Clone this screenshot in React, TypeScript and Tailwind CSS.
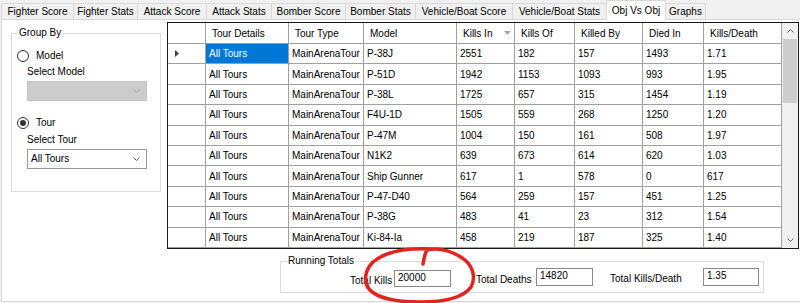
import React from "react";

type Col = { label: string; w: string; sort?: boolean };

const cols: Col[] = [
  { label: "Tour Details", w: "w-[83px]" },
  { label: "Tour Type", w: "w-[75px]" },
  { label: "Model", w: "w-[93px]" },
  { label: "Kills In", w: "w-[58px]", sort: true },
  { label: "Kills Of", w: "w-[60px]" },
  { label: "Killed By", w: "w-[68px]" },
  { label: "Died In", w: "w-[61px]" },
  { label: "Kills/Death", w: "w-[78px]" },
];

const rows: string[][] = [
  ["P-38J", "2551", "182", "157", "1493", "1.71"],
  ["P-51D", "1942", "1153", "1093", "993", "1.95"],
  ["P-38L", "1725", "657", "315", "1454", "1.19"],
  ["F4U-1D", "1505", "559", "268", "1250", "1.20"],
  ["P-47M", "1004", "150", "161", "508", "1.97"],
  ["N1K2", "639", "673", "614", "620", "1.03"],
  ["Ship Gunner", "617", "1", "578", "0", "617"],
  ["P-47-D40", "564", "259", "157", "451", "1.25"],
  ["P-38G", "483", "41", "23", "312", "1.54"],
  ["Ki-84-Ia", "458", "219", "187", "325", "1.40"],
];

const tabs = [
  { label: "Fighter Score", w: "w-[72px]" },
  { label: "Fighter Stats", w: "w-[64px]" },
  { label: "Attack Score", w: "w-[69px]" },
  { label: "Attack Stats", w: "w-[65px]" },
  { label: "Bomber Score", w: "w-[74px]" },
  { label: "Bomber Stats", w: "w-[70px]" },
  { label: "Vehicle/Boat Score", w: "w-[97px]" },
  { label: "Vehicle/Boat Stats", w: "w-[94px]" },
];

function Chevron({ up, color = "#606060" }: { up?: boolean; color?: string }) {
  return (
    <svg width="7" height="4" viewBox="0 0 7 4">
      <path
        d={up ? "M0.5 3.5 L3.5 0.5 L6.5 3.5" : "M0.5 0.5 L3.5 3.5 L6.5 0.5"}
        stroke={color}
        strokeWidth="1"
        fill="none"
      />
    </svg>
  );
}

function Radio({ checked, label }: { checked?: boolean; label: string }) {
  return (
    <div className="flex h-[14px] items-center pl-[5px]">
      <div className="flex h-[12px] w-[12px] items-center justify-center rounded-full border border-[#333333] bg-white">
        {checked && <div className="h-[6px] w-[6px] rounded-full bg-[#333333]" />}
      </div>
      <span className="ml-[7px] leading-[12px]">{label}</span>
    </div>
  );
}

export default function App() {
  return (
    <div className="relative h-[303px] w-[800px] overflow-hidden bg-[#f0f0f0] font-['Liberation_Sans',Arial,sans-serif] text-[10px] text-black">
      {/* tab strip */}
      <div className="flex h-[19px] items-end pl-[1px]">
        {tabs.map((t) => (
          <div
            key={t.label}
            className={`${t.w} flex h-[16px] shrink-0 justify-center border-l border-t border-[#d9d9d9] bg-[#f0f0f0] pt-[2px] leading-[12px]`}
          >
            {t.label}
          </div>
        ))}
        <div className="relative z-10 -mb-[1px] flex h-[20px] w-[60px] shrink-0 justify-center border-l border-r border-t border-[#d9d9d9] bg-white pt-[4px] leading-[12px]">
          Obj Vs Obj
        </div>
        <div className="flex h-[16px] w-[40px] shrink-0 justify-center border-r border-t border-[#d9d9d9] bg-[#f0f0f0] pt-[2px] leading-[12px]">
          Graphs
        </div>
      </div>

      {/* tab page */}
      <div className="ml-[1px] flex h-[283px] w-[800px] border border-[#d9d9d9] bg-white">
        {/* left: group by */}
        <div className="w-[165px] shrink-0 pt-[7px]">
          <fieldset className="ml-[9px] h-[165px] w-[150px] border border-[#dcdcdc]">
            <legend className="ml-[6px] px-[1px] leading-[12px]">Group By</legend>
            <div className="mt-[10px]">
              <Radio label="Model" />
            </div>
            <div className="mt-[3px] pl-[15px] leading-[12px]">Select Model</div>
            <div className="ml-[15px] mt-[3px] flex h-[20px] w-[120px] items-center justify-end border border-[#c4c4c4] bg-[#cccccc] pr-[6px]">
              <Chevron color="#a6a6a6" />
            </div>
            <div className="mt-[15px]">
              <Radio checked label="Tour" />
            </div>
            <div className="mt-[4px] pl-[15px] leading-[12px]">Select Tour</div>
            <div className="ml-[15px] mt-[3px] flex h-[20px] w-[120px] items-center justify-between border border-[#9a9a9a] bg-white pl-[3px] pr-[6px]">
              <span className="leading-[12px]">All Tours</span>
              <Chevron />
            </div>
          </fieldset>
        </div>

        {/* right: grid and totals */}
        <div className="flex-1 pt-[2px]">
          <div className="flex h-[227px] w-[632px] border border-[#1a1a1a] bg-white">
            <div className="w-[614px] shrink-0">
              <div className="flex h-[21px] border-b border-[#a0a0a0]">
                <div className="w-[38px] shrink-0 border-r border-[#a0a0a0]" />
                {cols.map((c) => (
                  <div
                    key={c.label}
                    className={`${c.w} flex shrink-0 items-center justify-between border-r border-[#a0a0a0] pl-[6px] pr-[3px]`}
                  >
                    <span>{c.label}</span>
                    {c.sort && (
                      <svg width="7" height="4" viewBox="0 0 7 4">
                        <path d="M0 0 H7 L3.5 4Z" fill="#a8a8a8" />
                      </svg>
                    )}
                  </div>
                ))}
              </div>
              {rows.map((r, i) => {
                const cells = ["All Tours", "MainArenaTour", ...r];
                return (
                  <div key={i} className="flex h-[20.4px] border-b border-[#a0a0a0]">
                    <div className="flex w-[38px] shrink-0 items-center border-r border-[#a0a0a0] pl-[7px]">
                      {i === 0 && (
                        <svg width="4" height="7" viewBox="0 0 4 7">
                          <path d="M0 0 L4 3.5 L0 7Z" fill="#404040" />
                        </svg>
                      )}
                    </div>
                    {cells.map((v, j) => (
                      <div
                        key={j}
                        className={`${cols[j].w} flex shrink-0 items-center border-r border-[#a0a0a0] pl-[3px] ${
                          i === 0 && j === 0 ? "bg-[#0078d7] text-white" : ""
                        }`}
                      >
                        {v}
                      </div>
                    ))}
                  </div>
                );
              })}
            </div>
            {/* scrollbar */}
            <div className="flex w-[16px] shrink-0 flex-col bg-[#f0f0f0]">
              <div className="flex h-[16px] items-center justify-center">
                <Chevron up />
              </div>
              <div className="mx-[1px] h-[64px] bg-[#cdcdcd]" />
              <div className="flex-1" />
              <div className="flex h-[16px] items-center justify-center">
                <Chevron />
              </div>
            </div>
          </div>

          <fieldset className="ml-[113px] mt-[6px] h-[38px] w-[484px] border border-[#dcdcdc]">
            <legend className="ml-[6px] px-[1px] leading-[12px]">Running Totals</legend>
            <div className="mt-[1px] flex items-start">
              <span className="ml-[69px] w-[44px] shrink-0 pt-[7px] leading-[12px]">Total Kills</span>
              <div className="mt-[2px] h-[17px] w-[57px] shrink-0 border border-[#8a8a8a] pl-[3px] pt-[1px] leading-[12px]">
                20000
              </div>
              <span className="ml-[25px] w-[60px] shrink-0 pt-[6px] leading-[12px]">Total Deaths</span>
              <div className="h-[18px] w-[57px] shrink-0 border border-[#8a8a8a] pl-[3px] pt-[1px] leading-[12px]">
                14820
              </div>
              <span className="ml-[17px] w-[93px] shrink-0 pt-[5px] leading-[12px]">Total Kills/Death</span>
              <div className="h-[18px] w-[56px] shrink-0 border border-[#8a8a8a] pl-[3px] pt-[1px] leading-[12px]">
                1.35
              </div>
            </div>
          </fieldset>
        </div>
      </div>

      {/* hand-drawn red circle over the Total Kills box */}
      <svg
        className="pointer-events-none absolute left-[355px] top-[240px]"
        width="130"
        height="63"
        viewBox="0 0 130 63"
      >
        <path
          d="M68 24 C69 18 70 13 72 10 C85 7 100 12 110 20 C118 27 121 38 116 47 C108 58 90 62 65 62 C40 62 22 58 14 49 C8 41 10 30 18 22 C30 12 50 8 75 9"
          stroke="#e3231d"
          strokeWidth="3.5"
          strokeLinecap="round"
          fill="none"
        />
      </svg>
    </div>
  );
}
